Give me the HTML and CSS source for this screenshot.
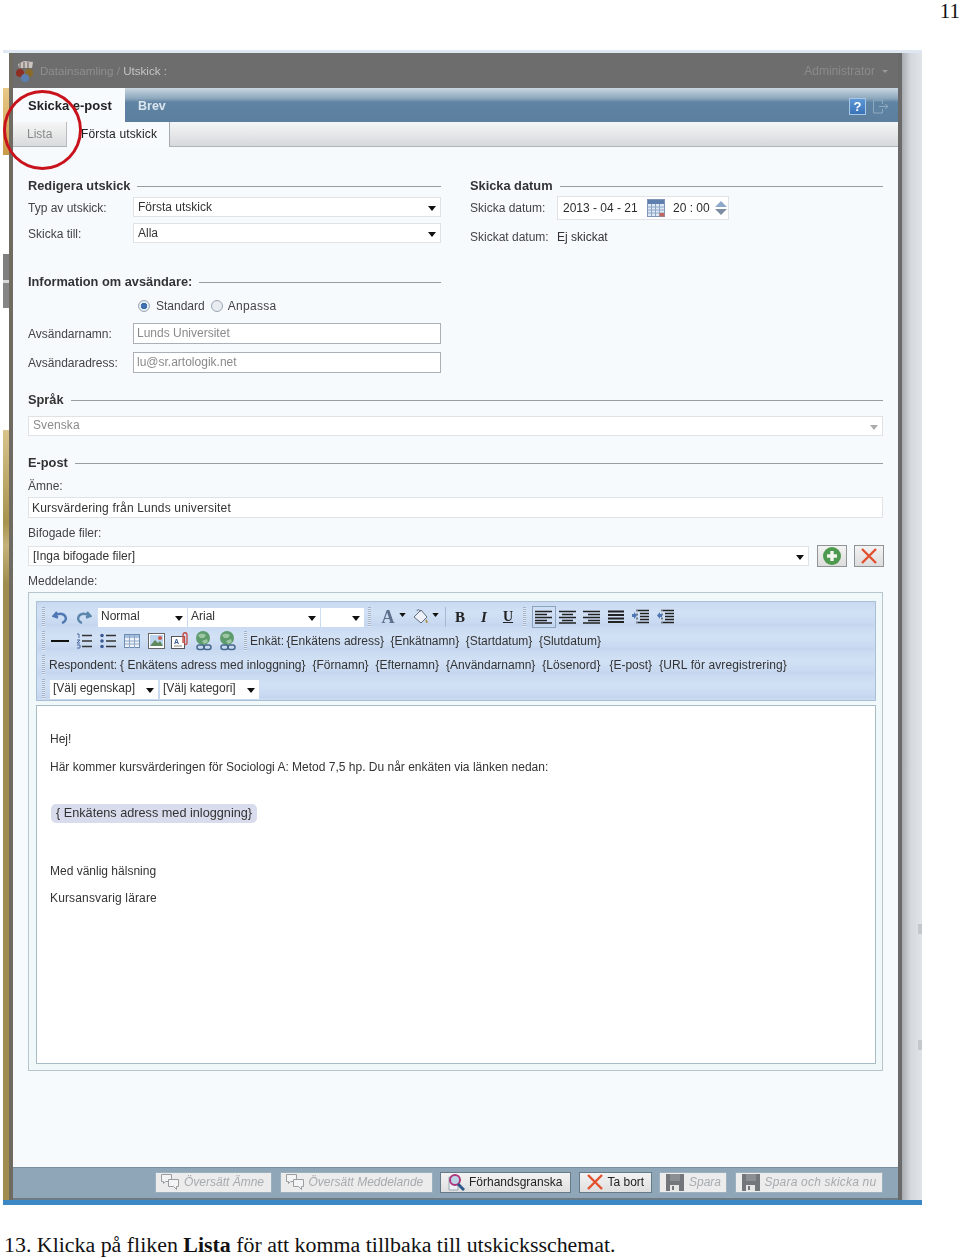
FILE: index.html
```html
<!DOCTYPE html>
<html lang="sv">
<head>
<meta charset="utf-8">
<title>Skicka e-post</title>
<link rel="stylesheet" href="styles.css">
</head>
<body>
<svg class="defs" width="0" height="0" aria-hidden="true">
  <defs>
    <symbol id="i-bubbles" viewBox="0 0 20 18">
      <path d="M1.500 1.500h10v7h-6l-2 2v-2h-2z" fill="#f4f4f4" stroke="currentColor"/>
      <path d="M8.500 6.500h10v7h-2v3l-3-3h-5z" fill="#f4f4f4" stroke="currentColor"/>
    </symbol>
    <symbol id="i-save" viewBox="0 0 18 18">
      <path d="M0 1h18v17H0z" fill="currentColor"/>
      <path d="M4 1h10v7H4z" fill="#8b8f94"/>
      <path d="M4 12h9v6H4z" fill="#e6e6e6"/>
      <path d="M6 13h2v4H6z" fill="currentColor"/>
    </symbol>
    <symbol id="i-x" viewBox="0 0 18 18">
      <path d="M2 2l14 14M16 2L2 16" stroke="#e2512f" stroke-width="2.400" fill="none"/>
    </symbol>
    <symbol id="i-caret" viewBox="0 0 8 5">
      <path d="M0 0h8L4 5z" fill="#111"/>
    </symbol>
    <symbol id="i-link" viewBox="0 0 20 20">
      <circle cx="9" cy="7" r="7" fill="#5d9b6c"/>
      <path d="M4 4c3-2 6-1 8 0l-2 3H6zM8 10l5-2 1 3-4 2z" fill="#9cc6a4"/>
      <rect x="3" y="14" width="7" height="4.500" rx="2.200" fill="none" stroke="#46688c" stroke-width="1.500"/>
      <rect x="10" y="14" width="7" height="4.500" rx="2.200" fill="none" stroke="#46688c" stroke-width="1.500"/>
    </symbol>
    <symbol id="i-lines" viewBox="0 0 16 14">
      <path d="M0 1.500h16M0 5h16M0 8.500h16M0 12h16" stroke="#222" stroke-width="1.800" fill="none"/>
    </symbol>
  </defs>
</svg>

<header class="page-head">11</header>

<div class="shot">
  <div class="strip">
    <span class="strip-gold"></span>
    <span class="strip-blank-a"></span>
    <span class="strip-grey"></span>
    <span class="strip-blank-b"></span>
    <span class="strip-tan"></span>
  </div>
  <div class="app">
    <div class="topbar">
      <svg class="logo" width="20" height="22" viewBox="0 0 20 22">
        <path d="M3 4l6-3 9 1-1 6H4z" fill="#c9c4c0"/>
        <path d="M5 3v6M9 2v7M13 2v7" stroke="#6b5a55" stroke-width="1"/>
        <circle cx="5" cy="13" r="4" fill="#8c2f22"/>
        <circle cx="14" cy="13" r="4" fill="#8a6a2a"/>
        <circle cx="10" cy="18" r="4" fill="#5c7fb0"/>
      </svg>
      <span class="crumb">Datainsamling / <b class="crumb-now">Utskick :</b></span>
      <span class="admin">Administrator</span>
      <span class="admin-caret"></span>
    </div>
    <div class="tabs">
      <span class="tab tab-on">Skicka e-post</span>
      <span class="tab">Brev</span>
      <span class="tab-icons">
        <span class="help">?</span>
        <svg class="exit" width="17" height="15" viewBox="0 0 17 15"><path d="M10.500 1H1.500v13h9M7 7.500h9M13 5l3 2.500L13 10M10.500 1v4M10.500 10v4" fill="none" stroke="#8fa9bf"/></svg>
      </span>
    </div>
    <div class="subtabs">
      <span class="subtab">Lista</span>
      <span class="subtab subtab-on">Första utskick</span>
    </div>
    <main class="content">
      <div class="cols">
        <section class="col">
          <h3 class="legend"><span>Redigera utskick</span></h3>
          <div class="row row-first"><label class="lbl lbl-low">Typ av utskick:</label><span class="select sel-w">Första utskick<svg class="caret"><use href="#i-caret"/></svg></span></div>
          <div class="row"><label class="lbl lbl-low">Skicka till:</label><span class="select sel-w">Alla<svg class="caret"><use href="#i-caret"/></svg></span></div>
          <h3 class="legend legend-info"><span>Information om avsändare:</span></h3>
          <div class="radios">
            <span class="radio radio-on"></span><span class="radio-txt">Standard</span>
            <span class="radio"></span><span class="radio-txt radio-txt-wide">Anpassa</span>
          </div>
          <div class="row row-in"><label class="lbl">Avsändarnamn:</label><span class="input sel-w grey">Lunds Universitet</span></div>
          <div class="row row-in"><label class="lbl">Avsändaradress:</label><span class="input sel-w grey">lu@sr.artologik.net</span></div>
        </section>
        <section class="col">
          <h3 class="legend"><span>Skicka datum</span></h3>
          <div class="row row-date"><label class="lbl lbl-date">Skicka datum:</label>
            <span class="datebox">
              <span class="date-txt">2013 - 04 - 21</span>
              <svg class="cal" width="18" height="18" viewBox="0 0 18 18">
                <rect x=".5" y=".5" width="17" height="17" fill="#dfe8f5" stroke="#7d97b8"/>
                <path d="M1 1h16v4H1z" fill="#5f7fae"/>
                <path d="M1 8h16M1 11h16M1 14h16M4.500 5v12M8.500 5v12M12.500 5v12" stroke="#8ea6c6"/>
                <path d="M12.500 14h5v3.500h-5z" fill="#c0675f"/>
              </svg>
              <span class="time-txt">20 : 00</span>
              <svg class="spin" width="14" height="18" viewBox="0 0 14 18"><path d="M7 2l6 6H1z" fill="#8da8c8"/><path d="M7 16l6-6H1z" fill="#7d8ea3"/></svg>
            </span>
          </div>
          <div class="row row-sent"><label class="lbl lbl-date">Skickat datum:</label><span class="sent">Ej skickat</span></div>
        </section>
      </div>

      <h3 class="legend legend-lang"><span>Språk</span></h3>
      <span class="select select-lang grey">Svenska<svg class="caret caret-soft"><use href="#i-caret"/></svg></span>

      <h3 class="legend legend-mail"><span>E-post</span></h3>
      <div class="cap cap-subject">Ämne:</div>
      <span class="input input-full">Kursvärdering från Lunds universitet</span>
      <div class="cap cap-files">Bifogade filer:</div>
      <div class="files">
        <span class="select select-files">[Inga bifogade filer]<svg class="caret"><use href="#i-caret"/></svg></span>
        <span class="sq sq-add"><svg width="20" height="20" viewBox="0 0 20 20"><circle cx="10" cy="10" r="9" fill="#4d9a4f"/><path d="M10 5v10M5 10h10" stroke="#f2f6ee" stroke-width="3.400"/></svg></span>
        <span class="sq sq-del"><svg width="18" height="18"><use href="#i-x"/></svg></span>
      </div>
      <div class="cap cap-msg">Meddelande:</div>

      <div class="editor">
        <div class="tools">
          <div class="tool-row">
            <span class="grip"></span>
            <span class="tb"><svg width="16" height="14" viewBox="0 0 16 14"><path d="M5 2L1.500 6 6 7.500M2.500 6C6 3 11 3 13 6s0 6-3 7" fill="none" stroke="#4f78b4" stroke-width="2.400"/></svg></span>
            <span class="tb"><svg width="16" height="14" viewBox="0 0 16 14"><path d="M11 2l3.500 4L10 7.500M13.500 6C10 3 5 3 3 6s0 6 3 7" fill="none" stroke="#5c87ad" stroke-width="2.400"/></svg></span>
            <span class="tsel tsel-a">Normal<svg class="caret"><use href="#i-caret"/></svg></span>
            <span class="tsel tsel-b">Arial<svg class="caret"><use href="#i-caret"/></svg></span>
            <span class="tsel tsel-c"><svg class="caret"><use href="#i-caret"/></svg></span>
            <span class="grip grip-m"></span>
            <span class="ta">A</span><svg class="mini"><use href="#i-caret"/></svg>
            <span class="tb tb-paint"><svg width="18" height="18" viewBox="0 0 18 18"><path d="M9 2l6 7-6 6-7-6z" fill="#eef2f8" stroke="#5f6c7d"/><path d="M5 3c0-2 3-2 3 1" fill="none" stroke="#5f6c7d"/><path d="M14 11c2 2 2 4 1 4s-2-2-1-4z" fill="#b08a3a"/></svg></span><svg class="mini"><use href="#i-caret"/></svg>
            <span class="sep"></span>
            <span class="tb tb-b">B</span>
            <span class="tb tb-i">I</span>
            <span class="tb tb-u">U</span>
            <span class="grip grip-m"></span>
            <span class="tb tb-on"><svg width="18" height="14" viewBox="0 0 18 14"><path d="M0 1.500h17M0 4.500h12M0 7.500h17M0 10.500h12M0 13h17" stroke="#222" stroke-width="1.600"/></svg></span>
            <span class="tb"><svg width="18" height="14" viewBox="0 0 18 14"><path d="M0 1.500h17M3 4.500h11M0 7.500h17M3 10.500h11M0 13h17" stroke="#222" stroke-width="1.600"/></svg></span>
            <span class="tb"><svg width="18" height="14" viewBox="0 0 18 14"><path d="M0 1.500h17M5 4.500h12M0 7.500h17M5 10.500h12M0 13h17" stroke="#222" stroke-width="1.600"/></svg></span>
            <span class="tb"><svg width="18" height="14"><use href="#i-lines"/></svg></span>
            <span class="tb tb-ind"><svg width="18" height="16" viewBox="0 0 18 16"><path d="M6 1.500h11M8 4.500h9M8 7.500h9M8 10.500h9M6 13.500h11" stroke="#222" stroke-width="1.500"/><path d="M5 .5v2M5 4.500v2M5 8.500v2M5 12.500v2" stroke="#222"/><path d="M0 5h2V3l3 3.500L2 10V8H0z" fill="#4f78b4"/></svg></span>
            <span class="tb tb-ind"><svg width="18" height="16" viewBox="0 0 18 16"><path d="M6 1.500h11M8 4.500h9M8 7.500h9M8 10.500h9M6 13.500h11" stroke="#222" stroke-width="1.500"/><path d="M5 .5v2M5 4.500v2M5 8.500v2M5 12.500v2" stroke="#222"/><path d="M5 5H3V3L0 6.500 3 10V8h2z" fill="#4f78b4"/></svg></span>
          </div>
          <div class="tool-row">
            <span class="grip"></span>
            <span class="tb"><svg width="18" height="4"><rect width="18" height="2" y="1" fill="#111"/></svg></span>
            <span class="tb"><svg width="16" height="16" viewBox="0 0 16 16"><path d="M6 2.500h10M6 8h10M6 13.500h10" stroke="#333" stroke-width="1.300"/><path d="M1 1h2v4M1 7h3L1 10h3M1 12h3v3H1" fill="none" stroke="#4a68a0"/></svg></span>
            <span class="tb"><svg width="16" height="16" viewBox="0 0 16 16"><path d="M6 2.500h10M6 8h10M6 13.500h10" stroke="#333" stroke-width="1.300"/><circle cx="2" cy="2.500" r="1.800" fill="#3a5a94"/><circle cx="2" cy="8" r="1.800" fill="#3a5a94"/><circle cx="2" cy="13.500" r="1.800" fill="#3a5a94"/></svg></span>
            <span class="tb"><svg width="16" height="14" viewBox="0 0 16 14"><rect x=".5" y=".5" width="15" height="13" fill="#eef3fa" stroke="#6d8cb5"/><path d="M1 1h14v3H1z" fill="#a7bfdf"/><path d="M1 7h14M1 10h14M5.500 1v13M10.500 1v13" stroke="#8ea6c6"/></svg></span>
            <span class="tb"><svg width="17" height="16" viewBox="0 0 17 16"><rect x=".5" y=".5" width="16" height="15" fill="#fff" stroke="#666"/><path d="M2 2h13v11H2z" fill="#bcd4ee"/><path d="M2 13l5-6 3 3 2-2 3 5z" fill="#5e8a5e"/><circle cx="12" cy="5" r="2" fill="#c9574c"/></svg></span>
            <span class="tb"><svg width="18" height="18" viewBox="0 0 18 18"><rect x=".5" y="4.500" width="13" height="12" fill="#fff" stroke="#555"/><text class="svg-a" x="3" y="12">A</text><path d="M3 14h8" stroke="#888"/><path d="M12 11V3c0-3 4-3 4 0v8c0 2-2.500 2-2.500 0V4" fill="none" stroke="#c34a42" stroke-width="1.300"/></svg></span>
            <span class="tb"><svg width="20" height="20"><use href="#i-link"/></svg></span>
            <span class="tb"><svg width="20" height="20"><use href="#i-link"/></svg></span>
            <span class="grip grip-t"></span>
            <span class="fields fields-a"><span class="f-lead">Enkät:</span><span>{Enkätens adress}</span><span>{Enkätnamn}</span><span>{Startdatum}</span><span>{Slutdatum}</span></span>
          </div>
          <div class="tool-row">
            <span class="grip"></span>
            <span class="fields fields-b"><span class="f-lead">Respondent:</span><span>{ Enkätens adress med inloggning}</span><span>{Förnamn}</span><span>{Efternamn}</span><span>{Användarnamn}</span><span>{Lösenord}</span><span class="f-mail">{E-post}</span><span class="f-url">{URL för avregistrering}</span></span>
          </div>
          <div class="tool-row">
            <span class="grip"></span>
            <span class="tsel tsel-d">[Välj egenskap]<svg class="caret"><use href="#i-caret"/></svg></span>
            <span class="tsel tsel-e">[Välj kategori]<svg class="caret"><use href="#i-caret"/></svg></span>
          </div>
        </div>
        <div class="body">
          <p class="p-hej">Hej!</p>
          <p class="p-har">Här kommer kursvärderingen för Sociologi A: Metod 7,5 hp. Du når enkäten via länken nedan:</p>
          <span class="chip">{ Enkätens adress med inloggning}</span>
          <p class="p-med">Med vänlig hälsning</p>
          <p class="p-kurs">Kursansvarig lärare</p>
        </div>
      </div>
    </main>
    <footer class="foot">
      <span class="btn off b1"><svg class="ico" width="20" height="18"><use href="#i-bubbles"/></svg>Översätt Ämne</span>
      <span class="btn off b2"><svg class="ico" width="20" height="18"><use href="#i-bubbles"/></svg>Översätt Meddelande</span>
      <span class="btn b3"><svg class="ico" width="18" height="18" viewBox="0 0 18 18"><path d="M2 4h9v13H2z" fill="#eef2f6" stroke="#9aa7b5"/><circle cx="8" cy="7" r="5" fill="#bcd6e8" stroke="#b0357a" stroke-width="2"/><path d="M11 11l6 6" stroke="#2c5a8a" stroke-width="3"/></svg>Förhandsgranska</span>
      <span class="btn b4"><svg class="ico" width="18" height="18"><use href="#i-x"/></svg>Ta bort</span>
      <span class="btn off b5"><svg class="ico ico-save" width="18" height="18"><use href="#i-save"/></svg>Spara</span>
      <span class="btn off b6"><svg class="ico ico-save" width="18" height="18"><use href="#i-save"/></svg>Spara och skicka nu</span>
    </footer>
  </div>
  <div class="shade">
    <span class="shade-mark shade-mark-a"></span>
    <span class="shade-mark shade-mark-b"></span>
  </div>
  <span class="ring"></span>
</div>

<p class="caption">13. Klicka på fliken <b>Lista</b> för att komma tillbaka till utskicksschemat.</p>
</body>
</html>
```
FILE: styles.css
```css
* { box-sizing: border-box; }
html, body { margin: 0; padding: 0; background: #fff; }
body { width: 960px; height: 1258px; overflow: hidden; font-family: "Liberation Sans", Arial, sans-serif; font-size: 12px; color: #2c2c2c; }
.defs { position: absolute; }
.page-head { height: 50px; text-align: right; font: 21px/22px "Liberation Serif", serif; color: #111; }
.caption { margin: 28px 0 0 4px; font: 21.9px/24px "Liberation Serif", serif; color: #111; }

.shot { position: relative; margin-left: 3px; width: 919px; height: 1155px; display: flex; filter: blur(.4px); border-top: 3px solid #dfe8f2; border-bottom: 5px solid #3c88c4; }
.strip { width: 10px; flex: none; display: flex; flex-direction: column; padding-top: 35px; border-right: 4px solid #6f6b60; }
.strip-gold { height: 67px; background: linear-gradient(#e8c988, #c99a47); }
.strip-blank-a { height: 99px; background: #fff; }
.strip-grey { height: 54px; background: linear-gradient(#7f7f7f 0 49%, #d8d8d8 49% 53%, #858585 53%); }
.strip-blank-b { height: 122px; background: #fff; }
.strip-tan { flex: 1; background: linear-gradient(#d8c48c, #a8924f 12%, #c5b27a 15%, #a08c4e 20%); }

.app { width: 885px; flex: none; display: flex; flex-direction: column; background: #f7fafd; }
.topbar { height: 35px; flex: none; background: #6e6d6d; display: flex; align-items: center; padding-left: 2px; color: #8f8f8f; }
.logo { margin-right: 5px; }
.crumb { font-size: 11.6px; }
.crumb-now { font-weight: normal; color: #c4c4c4; }
.admin { margin-left: auto; color: #8b8b8b; }
.admin-caret { width: 0; height: 0; margin: 1px 10px 0 7px; border: 3px solid transparent; border-top: 3px solid #9a9a9a; border-bottom: 0; }

.tabs { height: 34px; flex: none; display: flex; background: linear-gradient(#c8d7e2 0, #8ea8bd 30%, #5f83a3 42%, #5c7fa0 100%); }
.tab { width: 54px; padding: 11px 0 0 13px; font-weight: bold; font-size: 12.5px; color: #dbe5ee; }
.tab-on { width: 112px; padding: 10px 0 0 15px; font-size: 13px; background: #f8fbfd; color: #222; }
.tab-icons { margin-left: auto; display: flex; align-items: center; gap: 6px; padding: 2px 9px 0 0; }
.help { width: 17px; height: 17px; background: linear-gradient(#5d98d8, #3a73b8); border: 1px solid #a9c6e4; color: #fff; font-weight: bold; font-size: 13px; line-height: 15px; text-align: center; }

.subtabs { height: 25px; flex: none; display: flex; background: linear-gradient(#f4f5f6, #d6d9db); border-bottom: 1px solid #aeb4b8; }
.subtab { width: 53px; margin-left: 1px; padding: 5px 0 0 13px; color: #8a8a8a; border-right: 1px solid #b9bdc0; background: linear-gradient(#f6f6f6, #d9dbdc); }
.subtab-on { width: 103px; margin: 0 0 -1px; padding: 5px 0 0 14px; color: #222; letter-spacing: .15px; background: #f8fbfd; border-right: 1px solid #a5abaf; }

.content { flex: 1; padding: 0 15px; min-height: 0; }
.cols { display: grid; grid-template-columns: 413px 413px; column-gap: 29px; padding-top: 31px; }
.legend { display: flex; align-items: center; margin: 0; font-size: 12.8px; line-height: 16px; font-weight: bold; color: #333; }
.legend::after { content: ""; flex: 1; height: 1px; margin-left: 7px; background: #9a9c9e; }
.row { display: flex; align-items: center; }
.row-first { margin-top: 2px; height: 22px; }
.row + .row { margin-top: 4px; height: 22px; }
.lbl { width: 105px; flex: none; color: #444; }
.lbl-low { padding-top: 2px; }
.select, .input { position: relative; display: block; background: #fff; border: 1px solid #dfe3e6; padding: 2px 4px; line-height: 14px; color: #333; }
.sel-w { width: 308px; height: 20px; }
.caret { position: absolute; right: 4px; top: 8px; width: 8px; height: 5px; }
.caret-soft { opacity: .35; }
.grey { color: #8a8a8a; }
.legend-info { margin-top: 30px; }
.radios { display: flex; align-items: center; height: 24px; margin: 4px 0 0 110px; }
.radio { width: 12px; height: 12px; border-radius: 50%; background: #e8ecf1; border: 1px solid #9aa6b4; }
.radio-on { background: radial-gradient(#3f6fae 0 3px, #e8ecf1 3.500px); }
.radio-txt { margin: 0 6px 0 6px; color: #444; }
.radio-txt-wide { letter-spacing: .3px; margin-left: 5px; }
.radios + .row-in { margin-top: 5px; }
.row.row-in { height: 21px; }
.row.row-in + .row-in { margin-top: 8px; }
.row-in .input { height: 21px; border-color: #aab0b5; padding: 2px 3px; }

.lbl-date { width: 87px; }
.row-date { margin-top: 2px; height: 24px; }
.row.row-sent { margin-top: 6px; height: 22px; }
.datebox { display: flex; align-items: center; width: 172px; height: 24px; border: 1px solid #dfe3e6; background: #fff; padding-left: 5px; }
.date-txt { width: 84px; }
.cal { margin-right: 8px; }
.time-txt { width: 41px; }
.sent { color: #333; }

.legend-lang { margin-top: 19px; }
.select-lang { margin-top: 8px; height: 20px; padding-top: 1px; letter-spacing: .1px; }
.legend-mail { margin-top: 19px; }
.cap { color: #444; line-height: 14px; }
.cap-subject { margin-top: 8px; }
.input-full { margin-top: 4px; height: 21px; padding: 3px; letter-spacing: .17px; }
.cap-files { margin-top: 8px; }
.files { display: flex; margin-top: 6px; height: 20px; }
.select-files { flex: 1; margin-right: 8px; }
.sq { display: flex; align-items: center; justify-content: center; flex: none; width: 30px; height: 22px; margin: -1px 7px 0 0; background: linear-gradient(#f3f3f3, #dcdcdc); border: 1px solid #8f9497; }
.sq-del { margin-right: -1px; }
.cap-msg { margin-top: 8px; }

.editor { margin-top: 4px; height: 479px; padding: 8px 6px 6px 7px; border: 1px solid #b6c6cc; background: #f1f8fa; }
.tools { height: 100px; padding: 3px 0 0 5px; background: repeating-linear-gradient(#c8d9f1 0, #d2e1f5 11px, #c4d6ef 24px); border: 1px solid #a9bfd2; }
.tool-row { height: 24px; display: flex; align-items: center; }
.grip { width: 3px; height: 20px; margin: 0 3px 0 0; flex: none; background: repeating-linear-gradient(#a3b4c9 0 1px, #e1e9f5 1px 2px); }
.grip-m { margin: 0 4px 0 3px; }
.grip-t { margin: 0 3px 0 4px; }
.tb { display: flex; align-items: center; justify-content: center; width: 24px; height: 22px; flex: none; color: #222; }
.tb-b { font: bold 15px "Liberation Serif", serif; }
.tb-i { font: italic bold 15px "Liberation Serif", serif; }
.tb-u { font: bold 14px "Liberation Serif", serif; text-decoration: underline; }
.tb-on { border: 1px solid #8ba4c0; margin-left: 2px; }
.tb-ind { margin-left: 1px; }
.tb-paint { width: 18px; margin-left: 2px; }
.ta { font: bold 18px "Liberation Serif", serif; color: #5c6f8c; width: 18px; margin-left: 4px; text-align: center; }
.mini { width: 7px; height: 4px; margin: 0 4px 4px 2px; flex: none; }
.sep { width: 1px; height: 20px; margin: 0 2px; flex: none; background: #a9bad0; }
.tsel { position: relative; display: block; height: 19px; background: #fff; padding: 1px 3px; line-height: 15px; color: #333; margin-right: 1px; flex: none; }
.tsel-a { width: 89px; margin-left: 2px; }
.tsel-b { width: 132px; }
.tsel-c { width: 43px; }
.tsel-d { width: 108px; margin-left: 2px; }
.tsel-e { width: 99px; margin-left: 1px; }
.fields { display: flex; gap: 7px; color: #333; white-space: nowrap; }
.fields-a { gap: 6.500px; }
.fields-b { margin-left: 1px; }
.f-lead { margin-right: -4px; }
.f-mail { margin-left: 2px; }
.f-url { letter-spacing: .12px; }
.svg-a { font: bold 7px "Liberation Sans", sans-serif; fill: #3a5a94; }

.body { height: 359px; margin-top: 4px; padding: 25px 13px 0; background: #fff; border: 1px solid #a7bcc6; }
.body p { margin: 0; line-height: 16px; color: #333; }
.body .p-har { padding-top: 12px; }
.chip { display: inline-block; margin: 29px 0 0 1px; padding: 0 5px; height: 19px; font-size: 12.7px; line-height: 19px; border-radius: 5px; background: #d8dcec; color: #333; }
.body .p-med { padding-top: 40px; }
.body .p-kurs { padding-top: 11px; letter-spacing: .15px; }

.foot { height: 33px; flex: none; display: flex; align-items: center; padding: 0 0 2px 142px; gap: 7.500px; background: #8fa6b8; border-top: 1px solid #7c8f9e; border-bottom: 2px solid #6d7b84; }
.btn { display: flex; align-items: center; flex: none; height: 21px; padding: 0 5px; background: linear-gradient(#f3f3f3, #dfdfdf); border: 1px solid #667a88; color: #222; white-space: nowrap; overflow: hidden; }
.btn.off { border-color: #9db0be; background: #ececec; color: #a7abaf; font-style: italic; }
.ico { flex: none; margin-right: 4px; color: #9a9ea3; }
.btn .ico-save { color: #73777c; margin-right: 5px; }
.b1 { width: 117px; padding-left: 4px; }
.b2 { width: 153px; padding-left: 4px; }
.b3 { width: 131px; padding-left: 6px; }
.b4 { width: 73px; padding-left: 6px; }
.b5 { width: 68px; padding-left: 6px; }
.b6 { width: 148px; padding-left: 6px; letter-spacing: .2px; }

.shade { position: relative; flex: 1; border-left: 4px solid #6a6a6a; background: linear-gradient(90deg, #a9acb0, #d5d8dc 45%, #e0e3e8); }
.shade-mark { position: absolute; right: 0; width: 4px; height: 10px; background: #c4c8cb; }
.shade-mark-a { top: 871px; }
.shade-mark-b { top: 987px; }
.ring { position: absolute; left: 0; top: 37px; width: 79px; height: 80px; border: 3px solid #c8131c; border-radius: 50%; }
```
